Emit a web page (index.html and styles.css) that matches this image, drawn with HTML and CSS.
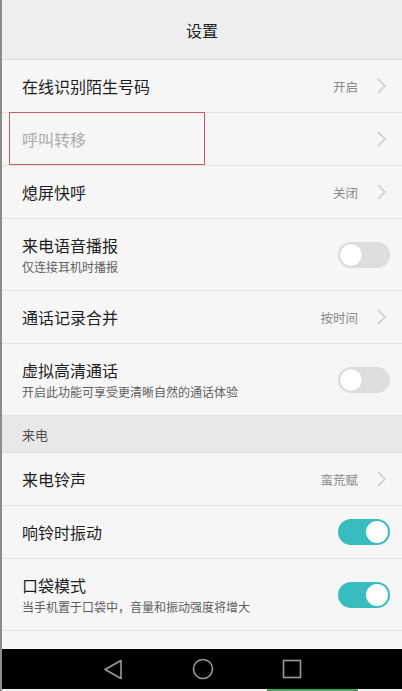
FILE: index.html
```html
<!DOCTYPE html>
<html lang="zh-CN">
<head>
    <meta charset="UTF-8">
    <meta name="viewport" content="width=device-width, initial-scale=1.0">
    <title>设置</title>
    <link rel="stylesheet" href="styles.css">
</head>
<body>
    <div class="screen">
        <div class="header">设置</div>

        <div class="row">
            <div class="label"><div class="title">在线识别陌生号码</div></div>
            <span class="value">开启</span>
            <svg class="chevron" width="9" height="16" viewBox="0 0 9 16"><path d="M1 1l7 7-7 7" fill="none" stroke="#c4c4c4" stroke-width="1.2"/></svg>
        </div>
        <div class="row">
            <div class="label"><div class="title disabled">呼叫转移</div></div>
            <svg class="chevron" width="9" height="16" viewBox="0 0 9 16"><path d="M1 1l7 7-7 7" fill="none" stroke="#c4c4c4" stroke-width="1.2"/></svg>
            <div class="mark"></div>
        </div>
        <div class="row">
            <div class="label"><div class="title">熄屏快呼</div></div>
            <span class="value">关闭</span>
            <svg class="chevron" width="9" height="16" viewBox="0 0 9 16"><path d="M1 1l7 7-7 7" fill="none" stroke="#c4c4c4" stroke-width="1.2"/></svg>
        </div>
        <div class="row tall">
            <div class="label">
                <div class="title">来电语音播报</div>
                <div class="sub">仅连接耳机时播报</div>
            </div>
            <div class="switch"><span class="knob"></span></div>
        </div>
        <div class="row">
            <div class="label"><div class="title">通话记录合并</div></div>
            <span class="value">按时间</span>
            <svg class="chevron" width="9" height="16" viewBox="0 0 9 16"><path d="M1 1l7 7-7 7" fill="none" stroke="#c4c4c4" stroke-width="1.2"/></svg>
        </div>
        <div class="row tall">
            <div class="label">
                <div class="title">虚拟高清通话</div>
                <div class="sub">开启此功能可享受更清晰自然的通话体验</div>
            </div>
            <div class="switch"><span class="knob"></span></div>
        </div>

        <div class="section">来电</div>

        <div class="row">
            <div class="label"><div class="title">来电铃声</div></div>
            <span class="value">蛮荒赋</span>
            <svg class="chevron" width="9" height="16" viewBox="0 0 9 16"><path d="M1 1l7 7-7 7" fill="none" stroke="#c4c4c4" stroke-width="1.2"/></svg>
        </div>
        <div class="row">
            <div class="label"><div class="title">响铃时振动</div></div>
            <div class="switch on"><span class="knob"></span></div>
        </div>
        <div class="row tall">
            <div class="label">
                <div class="title">口袋模式</div>
                <div class="sub">当手机置于口袋中，音量和振动强度将增大</div>
            </div>
            <div class="switch on"><span class="knob"></span></div>
        </div>
        <div class="row">
            <div class="label"><div class="title">来电翻转静音</div></div>
            <svg class="chevron" width="9" height="16" viewBox="0 0 9 16"><path d="M1 1l7 7-7 7" fill="none" stroke="#c4c4c4" stroke-width="1.2"/></svg>
        </div>

        <div class="navbar">
            <svg width="20" height="21" viewBox="0 0 20 21"><path d="M18 1.5v18L2 10.5z" fill="none" stroke="#9a9a9a" stroke-width="1.6" stroke-linejoin="round"/></svg>
            <svg width="22" height="22" viewBox="0 0 22 22"><circle cx="11" cy="11" r="9.5" fill="none" stroke="#9a9a9a" stroke-width="1.6"/></svg>
            <svg width="20" height="20" viewBox="0 0 20 20"><rect x="1.5" y="1.5" width="17" height="17" fill="none" stroke="#9a9a9a" stroke-width="1.6"/></svg>
        </div>
        <div class="bottom-strip"><span class="green"></span></div>
    </div>
</body>
</html>
```

FILE: styles.css
```css
html, body {
    margin: 0;
    padding: 0;
}
body {
    font-family: "Noto Sans CJK SC", "Noto Sans", sans-serif;
    background: #f6f6f6;
    width: 402px;
    height: 691px;
    overflow: hidden;
}
.screen {
    position: relative;
    height: 691px;
    overflow: hidden;
    border-left: 2px solid #8c8c8c;
    box-sizing: border-box;
    background: #f6f6f6;
}
.header {
    height: 60px;
    display: flex;
    align-items: center;
    justify-content: center;
    font-size: 16px;
    color: #222;
    background: #efefef;
    border-bottom: 1px solid #dedede;
    box-sizing: border-box;
}
.row {
    position: relative;
    display: flex;
    align-items: center;
    height: 53px;
    padding: 0 12px 0 20px;
    border-bottom: 1px solid #e2e2e2;
    box-sizing: border-box;
}
.row.tall {
    height: 72px;
}
.label {
    flex: 1;
    display: flex;
    flex-direction: column;
}
.title {
    font-size: 16px;
    color: #1e1e1e;
    line-height: 20px;
}
.title.disabled {
    color: #ababab;
}
.sub {
    font-size: 12px;
    color: #606060;
    line-height: 16px;
    margin-top: 4px;
}
.value {
    font-size: 12.5px;
    color: #888;
    margin-right: 19px;
}
.chevron {
    margin-right: 4px;
}
.mark {
    position: absolute;
    left: 7px;
    top: -1px;
    width: 196px;
    height: 53px;
    border: 1px solid #cf5a5a;
    box-sizing: border-box;
}
.switch {
    position: relative;
    width: 52px;
    height: 26px;
    border-radius: 13px;
    background: #dedede;
}
.switch .knob {
    position: absolute;
    top: 2px;
    left: 2px;
    width: 22px;
    height: 22px;
    border-radius: 50%;
    background: #fff;
    box-shadow: 0 0 1px rgba(0, 0, 0, 0.25);
}
.switch.on {
    background: #39bcbf;
}
.switch.on .knob {
    left: 28px;
    box-shadow: none;
}
.section {
    height: 37px;
    display: flex;
    align-items: center;
    padding-left: 20px;
    font-size: 13px;
    color: #505050;
    background: #e8e8e8;
    border-bottom: 1px solid #e0e0e0;
    box-sizing: border-box;
}
.navbar {
    position: absolute;
    left: -2px;
    right: 0;
    bottom: 2px;
    height: 40px;
    background: #000;
    display: flex;
    align-items: center;
    padding-left: 103px;
    gap: 70px;
}
.navbar svg:nth-child(2) {
    margin-left: -1px;
}
.navbar svg:nth-child(3) {
    margin-left: -2px;
}
.bottom-strip {
    position: absolute;
    left: -2px;
    right: 0;
    bottom: 0;
    height: 2px;
    background: #f2f2f2;
}
.bottom-strip .green {
    position: absolute;
    left: 267px;
    width: 91px;
    height: 2px;
    background: #45a85a;
}
```
